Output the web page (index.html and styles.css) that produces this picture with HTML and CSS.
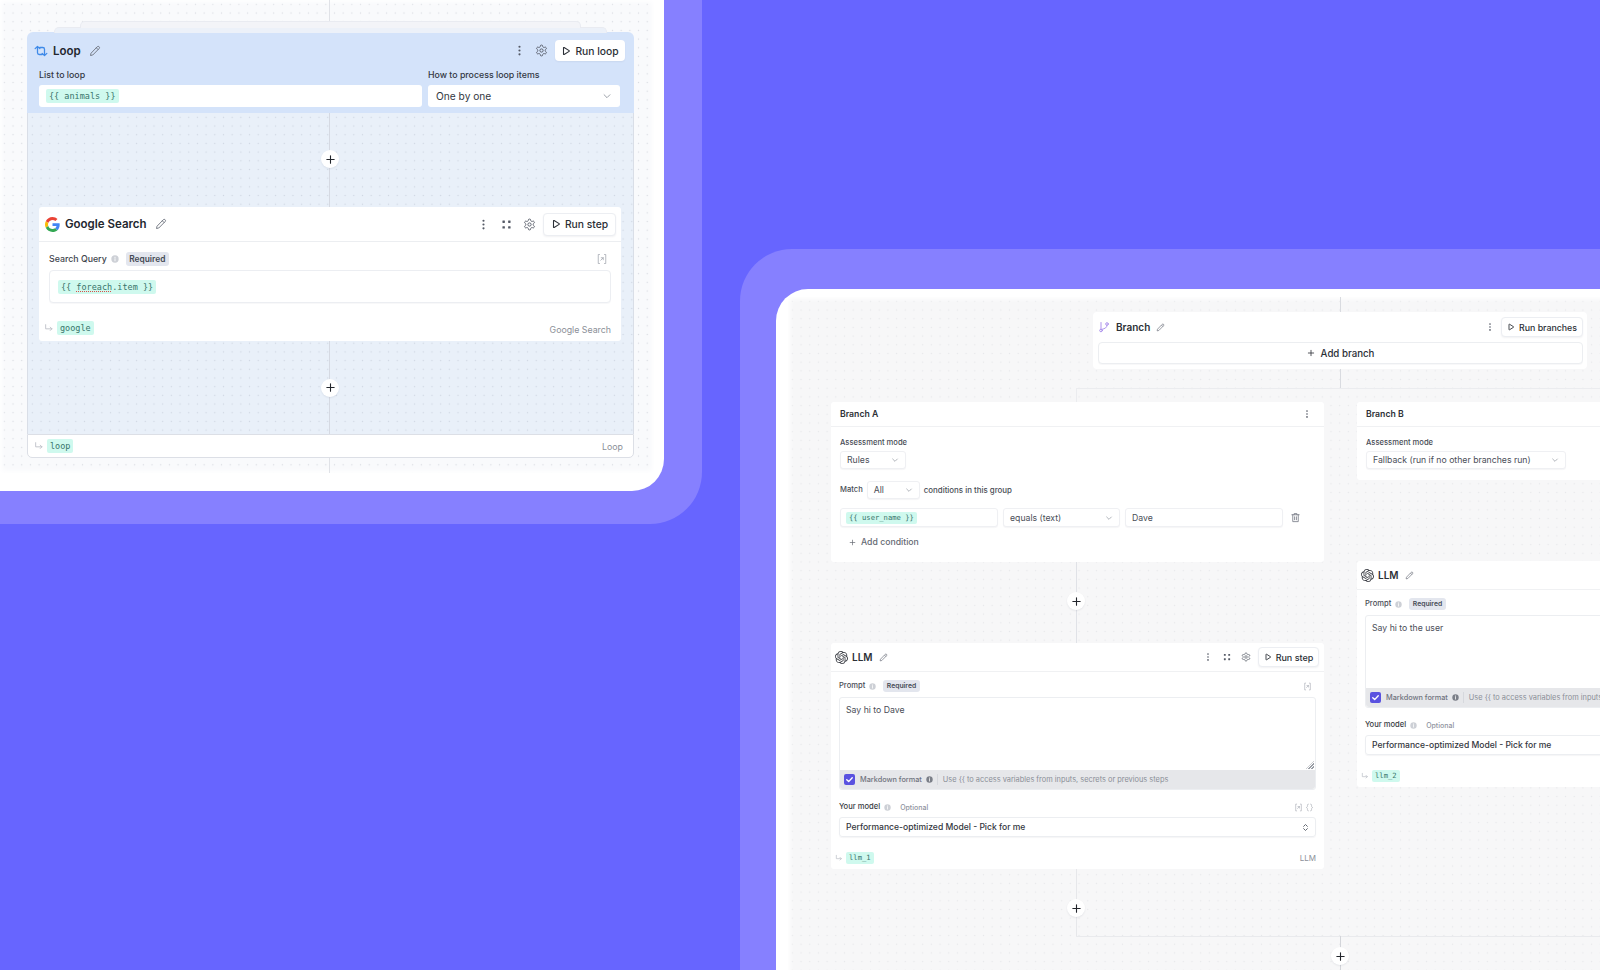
FILE: index.html
```html
<!DOCTYPE html>
<html lang="en">
<head>
    <meta charset="UTF-8">
    <meta name="viewport" content="width=device-width, initial-scale=1.0">
    <title>Loop and branch workflow steps</title>
    <link rel="stylesheet" href="styles.css">
</head>
<body>

<svg class="sprite" xmlns="http://www.w3.org/2000/svg">
    <symbol id="i-pencil" viewBox="0 0 24 24"><path d="M16.5 3.5a2.6 2.6 0 0 1 3.7 3.7L7.5 20 3 21l1-4.5z M14.5 5.5l4 4" fill="none" stroke="currentColor" stroke-width="1.8" stroke-linejoin="round"/></symbol>
    <symbol id="i-kebab" viewBox="0 0 24 24"><circle cx="12" cy="5" r="2" fill="currentColor"/><circle cx="12" cy="12" r="2" fill="currentColor"/><circle cx="12" cy="19" r="2" fill="currentColor"/></symbol>
    <symbol id="i-grid" viewBox="0 0 24 24"><g fill="currentColor"><rect x="4.500" y="4.500" width="4.500" height="4.500" rx="0.800"/><rect x="15" y="4.500" width="4.500" height="4.500" rx="0.800"/><rect x="4.500" y="15" width="4.500" height="4.500" rx="0.800"/><rect x="15" y="15" width="4.500" height="4.500" rx="0.800"/></g></symbol>
    <symbol id="i-gear" viewBox="0 0 24 24"><g fill="none" stroke="currentColor" stroke-width="1.7" stroke-linejoin="round"><path d="M12.2 2h-.4a2 2 0 0 0-2 2v.2a2 2 0 0 1-1 1.7l-.4.3a2 2 0 0 1-2 0l-.2-.1a2 2 0 0 0-2.7.7l-.2.4a2 2 0 0 0 .7 2.7l.2.1a2 2 0 0 1 1 1.7v.6a2 2 0 0 1-1 1.7l-.2.1a2 2 0 0 0-.7 2.7l.2.4a2 2 0 0 0 2.7.7l.2-.1a2 2 0 0 1 2 0l.4.3a2 2 0 0 1 1 1.7v.2a2 2 0 0 0 2 2h.4a2 2 0 0 0 2-2v-.2a2 2 0 0 1 1-1.7l.4-.3a2 2 0 0 1 2 0l.2.1a2 2 0 0 0 2.7-.7l.2-.4a2 2 0 0 0-.7-2.7l-.2-.1a2 2 0 0 1-1-1.7v-.6a2 2 0 0 1 1-1.7l.2-.1a2 2 0 0 0 .7-2.7l-.2-.4a2 2 0 0 0-2.7-.7l-.2.1a2 2 0 0 1-2 0l-.4-.3a2 2 0 0 1-1-1.7V4a2 2 0 0 0-2-2z"/><circle cx="12" cy="12" r="3"/></g></symbol>
    <symbol id="i-play" viewBox="0 0 24 24"><path d="M6 4.5v15a1 1 0 0 0 1.5.85l12-7.5a1 1 0 0 0 0-1.7l-12-7.5A1 1 0 0 0 6 4.5z" fill="none" stroke="currentColor" stroke-width="2.6" stroke-linejoin="round"/></symbol>
    <symbol id="i-chevron" viewBox="0 0 24 24"><path d="M5 9l7 7 7-7" fill="none" stroke="currentColor" stroke-width="2" stroke-linecap="round" stroke-linejoin="round"/></symbol>
    <symbol id="i-updown" viewBox="0 0 24 24"><path d="M7 9l5-5 5 5M7 15l5 5 5-5" fill="none" stroke="currentColor" stroke-width="2.4" stroke-linecap="round" stroke-linejoin="round"/></symbol>
    <symbol id="i-info" viewBox="0 0 24 24"><circle cx="12" cy="12" r="11" fill="currentColor"/><path d="M12 11v6.5M12 6.5v1.5" stroke="#fff" stroke-width="2.6" stroke-linecap="round"/></symbol>
    <symbol id="i-return" viewBox="0 0 24 24"><path d="M4 4v10h15M15 10l4 4-4 4" fill="none" stroke="currentColor" stroke-width="2" stroke-linecap="round" stroke-linejoin="round"/></symbol>
    <symbol id="i-var" viewBox="0 0 24 24"><path d="M7 3H4.5v18H7M17 3h2.5v18H17M9.5 14.5L14.5 9.5M10.5 9.5h4v4" fill="none" stroke="currentColor" stroke-width="1.6" stroke-linecap="round" stroke-linejoin="round"/></symbol>
    <symbol id="i-braces" viewBox="0 0 24 24"><path d="M9 3C6.5 3 6.5 4.5 6.5 7c0 3-.5 4-2.5 5 2 1 2.500 2 2.500 5 0 2.500 0 4 2.500 4M15 3c2.500 0 2.500 1.500 2.500 4 0 3 .5 4 2.500 5-2 1-2.500 2-2.500 5 0 2.500 0 4-2.500 4" fill="none" stroke="currentColor" stroke-width="1.7" stroke-linecap="round"/></symbol>
    <symbol id="i-plus" viewBox="0 0 24 24"><path d="M12 4v16M4 12h16" fill="none" stroke="currentColor" stroke-width="2.4" stroke-linecap="round"/></symbol>
    <symbol id="i-trash" viewBox="0 0 24 24"><path d="M4 6h16M9 6V3.500h6V6M6 6v15h12V6M10 10.500v6.500M14 10.500v6.500" fill="none" stroke="currentColor" stroke-width="1.8" stroke-linecap="round" stroke-linejoin="round"/></symbol>
    <symbol id="i-loop" viewBox="0 0 24 24"><path d="M2 8l4-4 4 4M6 4.500V15a3 3 0 0 0 3 3h5M22 16l-4 4-4-4M18 19.500V9a3 3 0 0 0-3-3h-5" fill="none" stroke="currentColor" stroke-width="2.2" stroke-linecap="round" stroke-linejoin="round"/></symbol>
    <symbol id="i-branch" viewBox="0 0 24 24"><g fill="none" stroke="currentColor" stroke-width="1.8" stroke-linecap="round"><circle cx="6" cy="19" r="2.600"/><circle cx="18" cy="6" r="2.600"/><path d="M6 16.400V3M18 8.600c0 5-4 6.400-9.500 8"/></g></symbol>
    <symbol id="i-openai" viewBox="0 0 24 24"><path fill="currentColor" d="M22.2819 9.8211a5.9847 5.9847 0 0 0-.5157-4.9108 6.0462 6.0462 0 0 0-6.5098-2.9A6.0651 6.0651 0 0 0 4.9807 4.1818a5.9847 5.9847 0 0 0-3.9977 2.9 6.0462 6.0462 0 0 0 .7427 7.0966 5.98 5.98 0 0 0 .511 4.9107 6.051 6.051 0 0 0 6.5146 2.9001A5.9847 5.9847 0 0 0 13.2599 24a6.0557 6.0557 0 0 0 5.7718-4.2058 5.9894 5.9894 0 0 0 3.9977-2.9001 6.0557 6.0557 0 0 0-.7475-7.0729zm-9.022 12.6081a4.4755 4.4755 0 0 1-2.8764-1.0408l.1419-.0804 4.7783-2.7582a.7948.7948 0 0 0 .3927-.6813v-6.7369l2.02 1.1686a.071.071 0 0 1 .038.052v5.5826a4.504 4.504 0 0 1-4.4945 4.4944zm-9.6607-4.1254a4.4708 4.4708 0 0 1-.5346-3.0137l.142.0852 4.783 2.7582a.7712.7712 0 0 0 .7806 0l5.8428-3.3685v2.3324a.0804.0804 0 0 1-.0332.0615L9.74 19.9502a4.4992 4.4992 0 0 1-6.1408-1.6464zM2.3408 7.8956a4.485 4.485 0 0 1 2.3655-1.9728V11.6a.7664.7664 0 0 0 .3879.6765l5.8144 3.3543-2.0201 1.1685a.0757.0757 0 0 1-.071 0l-4.8303-2.7865A4.504 4.504 0 0 1 2.3408 7.872zm16.5963 3.8558L13.1038 8.364 15.1192 7.2a.0757.0757 0 0 1 .071 0l4.8303 2.7913a4.4944 4.4944 0 0 1-.6765 8.1042v-5.6772a.79.79 0 0 0-.407-.667zm2.0107-3.0231l-.142-.0852-4.7735-2.7818a.7759.7759 0 0 0-.7854 0L9.409 9.2297V6.8974a.0662.0662 0 0 1 .0284-.0615l4.8303-2.7866a4.4992 4.4992 0 0 1 6.6802 4.66zM8.3065 12.863l-2.02-1.1638a.0804.0804 0 0 1-.038-.0567V6.0742a4.4992 4.4992 0 0 1 7.3757-3.4537l-.142.0805L8.704 5.459a.7948.7948 0 0 0-.3927.6813zm1.0976-2.3654l2.602-1.4998 2.6069 1.4998v2.9994l-2.5974 1.4997-2.6067-1.4997Z"/></symbol>
    <symbol id="i-google" viewBox="0 0 48 48">
        <path fill="#EA4335" d="M24 9.5c3.54 0 6.71 1.22 9.21 3.6l6.85-6.85C35.9 2.38 30.47 0 24 0 14.62 0 6.51 5.38 2.56 13.22l7.98 6.19C12.43 13.72 17.74 9.5 24 9.5z"/>
        <path fill="#4285F4" d="M46.98 24.55c0-1.57-.15-3.09-.38-4.55H24v9.02h12.94c-.58 2.96-2.26 5.48-4.78 7.18l7.73 6c4.51-4.18 7.09-10.36 7.09-17.65z"/>
        <path fill="#FBBC05" d="M10.53 28.59c-.48-1.45-.76-2.99-.76-4.59s.27-3.14.76-4.59l-7.98-6.19C.92 16.46 0 20.12 0 24c0 3.88.92 7.54 2.56 10.78l7.97-6.19z"/>
        <path fill="#34A853" d="M24 48c6.48 0 11.93-2.13 15.89-5.81l-7.73-6c-2.15 1.45-4.92 2.3-8.16 2.3-6.26 0-11.57-4.22-13.47-9.91l-7.98 6.19C6.51 42.62 14.62 48 24 48z"/>
    </symbol>
</svg>

<!-- first window: loop -->
<div class="window window-loop">
    <div class="panel panel-loop">
        <div class="canvas canvas-loop">
            <div class="edge edge-loop-top"></div>
            <div class="edge edge-loop-bottom"></div>

            <div class="loop-card">
                <div class="loop-head">
                    <div class="head-row">
                        <svg class="icon loop-icon"><use href="#i-loop"/></svg>
                        <span class="title-lg">Loop</span>
                        <svg class="icon pencil"><use href="#i-pencil"/></svg>
                        <span class="spacer"></span>
                        <svg class="icon tool"><use href="#i-kebab"/></svg>
                        <svg class="icon tool"><use href="#i-gear"/></svg>
                        <button class="run-btn run-lg run-flat"><svg class="icon play"><use href="#i-play"/></svg>Run loop</button>
                    </div>
                    <div class="loop-fields">
                        <div class="loop-field loop-field-list">
                            <span class="label-lg">List to loop</span>
                            <div class="input-flat"><span class="chip chip-lg">{{ animals }}</span></div>
                        </div>
                        <div class="loop-field loop-field-mode">
                            <span class="label-lg">How to process loop items</span>
                            <div class="input-flat select-flat">One by one<svg class="icon chevron"><use href="#i-chevron"/></svg></div>
                        </div>
                    </div>
                </div>

                <div class="loop-body">
                    <div class="connector connector-top"><span class="plus"><svg class="icon plus-icon"><use href="#i-plus"/></svg></span></div>

                    <div class="google-card">
                        <div class="google-head">
                            <svg class="icon google-icon"><use href="#i-google"/></svg>
                            <span class="title-lg">Google Search</span>
                            <svg class="icon pencil"><use href="#i-pencil"/></svg>
                            <span class="spacer"></span>
                            <svg class="icon tool"><use href="#i-kebab"/></svg>
                            <svg class="icon tool"><use href="#i-grid"/></svg>
                            <svg class="icon tool"><use href="#i-gear"/></svg>
                            <button class="run-btn run-lg"><svg class="icon play"><use href="#i-play"/></svg>Run step</button>
                        </div>
                        <div class="google-body">
                            <div class="field-row field-row-lg">
                                <span class="field-name">Search Query</span>
                                <svg class="icon info"><use href="#i-info"/></svg>
                                <span class="badge badge-lg">Required</span>
                                <span class="spacer"></span>
                                <svg class="icon var var-lg"><use href="#i-var"/></svg>
                            </div>
                            <div class="query-box"><span class="chip chip-lg">{{ <span class="typo">foreach</span>.item }}</span></div>
                            <div class="step-foot google-foot">
                                <svg class="icon return"><use href="#i-return"/></svg>
                                <span class="chip chip-out">google</span>
                                <span class="spacer"></span>
                                <span class="step-type step-type-lg">Google Search</span>
                            </div>
                        </div>
                    </div>

                    <div class="connector connector-bottom"><span class="plus"><svg class="icon plus-icon"><use href="#i-plus"/></svg></span></div>
                </div>

                <div class="loop-foot">
                    <svg class="icon return"><use href="#i-return"/></svg>
                    <span class="chip chip-out">loop</span>
                    <span class="spacer"></span>
                    <span class="step-type step-type-lg">Loop</span>
                </div>
            </div>
        </div>
    </div>
</div>

<!-- second window: branches -->
<div class="window window-branch">
    <div class="panel panel-branch">
        <div class="canvas canvas-branch">
            <div class="edge e1"></div>
            <div class="edge e2"></div>
            <div class="edge e3"></div>
            <div class="edge e4"></div>
            <div class="edge e5"></div>
            <div class="edge e6"></div>
            <div class="edge e7"></div>

            <span class="plus plus-a"><svg class="icon plus-icon"><use href="#i-plus"/></svg></span>
            <span class="plus plus-b"><svg class="icon plus-icon"><use href="#i-plus"/></svg></span>
            <span class="plus plus-c"><svg class="icon plus-icon"><use href="#i-plus"/></svg></span>

            <div class="node node-branch">
                <div class="branch-head">
                    <svg class="icon branch-icon"><use href="#i-branch"/></svg>
                    <span class="title-md">Branch</span>
                    <svg class="icon pencil pencil-sm"><use href="#i-pencil"/></svg>
                    <span class="spacer"></span>
                    <svg class="icon tool tool-sm"><use href="#i-kebab"/></svg>
                    <button class="run-btn run-sm run-wide"><svg class="icon play play-sm"><use href="#i-play"/></svg>Run branches</button>
                </div>
                <button class="add-branch"><svg class="icon add-icon"><use href="#i-plus"/></svg>Add branch</button>
            </div>

            <div class="node node-a">
                <div class="case-head">
                    <span class="case-title">Branch A</span>
                    <span class="spacer"></span>
                    <svg class="icon tool tool-sm"><use href="#i-kebab"/></svg>
                </div>
                <div class="case-body">
                    <span class="label-sm">Assessment mode</span>
                    <div class="input-sm select-sm select-rules">Rules<svg class="icon chevron"><use href="#i-chevron"/></svg></div>
                    <div class="match-row">
                        <span class="label-sm">Match</span>
                        <div class="input-sm select-sm select-all">All<svg class="icon chevron"><use href="#i-chevron"/></svg></div>
                        <span class="label-sm match-note">conditions in this group</span>
                    </div>
                    <div class="condition-row">
                        <div class="input-sm cond-col"><span class="chip chip-sm">{{ user_name }}</span></div>
                        <div class="input-sm select-sm cond-op">equals (text)<svg class="icon chevron"><use href="#i-chevron"/></svg></div>
                        <div class="input-sm cond-col">Dave</div>
                        <svg class="icon trash"><use href="#i-trash"/></svg>
                    </div>
                    <div class="add-condition"><svg class="icon add-cond-icon"><use href="#i-plus"/></svg>Add condition</div>
                </div>
            </div>

            <div class="node node-b">
                <div class="case-head">
                    <span class="case-title">Branch B</span>
                </div>
                <div class="case-body">
                    <span class="label-sm">Assessment mode</span>
                    <div class="input-sm select-sm select-fallback">Fallback (run if no other branches run)<svg class="icon chevron"><use href="#i-chevron"/></svg></div>
                </div>
            </div>

            <div class="node llm node-llm-a">
                <div class="llm-head">
                    <svg class="icon openai"><use href="#i-openai"/></svg>
                    <span class="title-md">LLM</span>
                    <svg class="icon pencil pencil-sm"><use href="#i-pencil"/></svg>
                    <span class="spacer"></span>
                    <svg class="icon tool tool-sm"><use href="#i-kebab"/></svg>
                    <svg class="icon tool tool-sm"><use href="#i-grid"/></svg>
                    <svg class="icon tool tool-sm"><use href="#i-gear"/></svg>
                    <button class="run-btn run-sm"><svg class="icon play play-sm"><use href="#i-play"/></svg>Run step</button>
                </div>
                <div class="llm-body">
                    <div class="field-row">
                        <span class="label-sm">Prompt</span>
                        <svg class="icon info info-sm"><use href="#i-info"/></svg>
                        <span class="badge">Required</span>
                        <span class="spacer"></span>
                        <svg class="icon var var-sm var-end"><use href="#i-var"/></svg>
                    </div>
                    <div class="prompt-box">
                        <div class="prompt-text">Say hi to Dave<span class="grip"></span></div>
                        <div class="prompt-bar">
                            <span class="checkbox"><svg viewBox="0 0 12 12"><path d="M3 6.200l2.100 2.100L9 4" fill="none" stroke="#fff" stroke-width="1.500" stroke-linecap="round" stroke-linejoin="round"/></svg></span>
                            <span>Markdown format</span>
                            <svg class="icon info info-dark"><use href="#i-info"/></svg>
                            <span class="bar-sep"></span>
                            <span class="bar-hint">Use {{ to access variables from inputs, secrets or previous steps</span>
                        </div>
                    </div>
                    <div class="field-row field-row-model">
                        <span class="label-sm label-strong">Your model</span>
                        <svg class="icon info info-sm"><use href="#i-info"/></svg>
                        <span class="optional">Optional</span>
                        <span class="spacer"></span>
                        <svg class="icon var var-sm"><use href="#i-var"/></svg>
                        <svg class="icon var var-sm"><use href="#i-braces"/></svg>
                    </div>
                    <div class="model-select">Performance-optimized Model - Pick for me<svg class="icon updown"><use href="#i-updown"/></svg></div>
                    <div class="step-foot llm-foot">
                        <svg class="icon return return-sm"><use href="#i-return"/></svg>
                        <span class="chip chip-sm">llm_1</span>
                        <span class="spacer"></span>
                        <span class="step-type">LLM</span>
                    </div>
                </div>
            </div>

            <div class="node llm node-llm-b">
                <div class="llm-head">
                    <svg class="icon openai"><use href="#i-openai"/></svg>
                    <span class="title-md">LLM</span>
                    <svg class="icon pencil pencil-sm"><use href="#i-pencil"/></svg>
                </div>
                <div class="llm-body">
                    <div class="field-row">
                        <span class="label-sm">Prompt</span>
                        <svg class="icon info info-sm"><use href="#i-info"/></svg>
                        <span class="badge">Required</span>
                    </div>
                    <div class="prompt-box">
                        <div class="prompt-text">Say hi to the user</div>
                        <div class="prompt-bar">
                            <span class="checkbox"><svg viewBox="0 0 12 12"><path d="M3 6.200l2.100 2.100L9 4" fill="none" stroke="#fff" stroke-width="1.500" stroke-linecap="round" stroke-linejoin="round"/></svg></span>
                            <span>Markdown format</span>
                            <svg class="icon info info-dark"><use href="#i-info"/></svg>
                            <span class="bar-sep"></span>
                            <span class="bar-hint">Use {{ to access variables from inputs, secrets or previous steps</span>
                        </div>
                    </div>
                    <div class="field-row field-row-model">
                        <span class="label-sm label-strong">Your model</span>
                        <svg class="icon info info-sm"><use href="#i-info"/></svg>
                        <span class="optional">Optional</span>
                    </div>
                    <div class="model-select">Performance-optimized Model - Pick for me</div>
                    <div class="step-foot llm-foot">
                        <svg class="icon return return-sm"><use href="#i-return"/></svg>
                        <span class="chip chip-sm">llm_2</span>
                    </div>
                </div>
            </div>
        </div>
    </div>
</div>

</body>
</html>
```

FILE: styles.css
```css
* {
    box-sizing: border-box;
}

html, body {
    margin: 0;
    height: 100%;
}

body {
    position: relative;
    overflow: hidden;
    background-color: #6765ff;
    font-family: "Inter", "Noto Sans", sans-serif;
    color: #2b2f36;
}

.sprite {
    display: none;
}

.icon {
    display: block;
    flex: none;
}

.spacer {
    flex: 1;
}

button {
    font-family: inherit;
    color: inherit;
}

/* windows */
.window {
    position: absolute;
    background-color: #8680ff;
}

.window-loop {
    left: 0;
    top: 0;
    width: 702px;
    height: 524px;
    border-bottom-right-radius: 52px;
}

.window-branch {
    left: 740px;
    top: 249px;
    width: 900px;
    height: 760px;
    border-top-left-radius: 52px;
    padding: 40px 0 0 36px;
}

.panel {
    background-color: #fff;
}

.panel-loop {
    width: 664px;
    height: 491px;
    padding: 0 10px 18px 0;
    border-bottom-right-radius: 32px;
}

.panel-branch {
    height: 100%;
    padding: 8px 0 0 12px;
    border-top-left-radius: 32px;
}

.canvas {
    position: relative;
    height: 100%;
    background-size: 8.7px 8.7px;
    box-shadow: inset 0 0 5px 2px #fff;
}

.canvas-loop {
    background-color: #f9fafc;
    background-image: radial-gradient(circle, #d9dbe2 0.7px, transparent 1px);
}

.canvas-branch {
    background-color: #f7f7f8;
    background-image: radial-gradient(circle, #e6e7ea 0.7px, transparent 1px);
}

/* edges between steps */
.edge {
    position: absolute;
    background-color: #e0e2e7;
    width: 1px;
}

.edge-loop-top {
    left: 329px;
    top: 0;
    height: 32px;
}

.edge-loop-bottom {
    left: 329px;
    top: 458px;
    height: 15px;
}

.e1 { left: 552px; top: 0; height: 91px; background-color: #d9dbe0; }
.e2 { left: 288px; top: 91px; width: 600px; height: 1px; background-color: #ebecef; }
.e3 { left: 288px; top: 91px; height: 14px; background-color: #ebecef; }
.e4 { left: 288px; top: 265px; height: 81px; }
.e5 { left: 288px; top: 572px; height: 67px; background-color: #e6e7ea; }
.e6 { left: 288px; top: 639px; width: 600px; height: 1px; background-color: #e9eaed; }
.e7 { left: 552px; top: 639px; height: 40px; background-color: #d3d5da; }

.plus {
    display: flex;
    align-items: center;
    justify-content: center;
    width: 18px;
    height: 18px;
    border-radius: 50%;
    background-color: #fff;
    box-shadow: 0 1px 2px rgba(30, 35, 60, 0.08);
    color: #23262c;
}

.plus-icon {
    width: 11px;
    height: 11px;
}

.plus-a { position: absolute; left: 279px; top: 295px; }
.plus-b { position: absolute; left: 279px; top: 602px; }
.plus-c { position: absolute; left: 543px; top: 650px; }

/* loop card */
.loop-card {
    position: absolute;
    left: 27px;
    top: 32px;
    width: 607px;
    height: 426px;
    display: flex;
    flex-direction: column;
    border-radius: 6px;
}

.loop-card::before,
.loop-card::after {
    content: "";
    position: absolute;
    border: 1px solid #e9ebf1;
    border-bottom: none;
    border-radius: 5px 5px 0 0;
}

.loop-card::before {
    left: 27px;
    right: 27px;
    top: -5px;
    height: 5px;
    background-color: #ecf1f9;
}

.loop-card::after {
    left: 53px;
    right: 53px;
    top: -11px;
    height: 6px;
    background-color: #f3f4f8;
}

.loop-head {
    height: 81px;
    padding: 8px 9px 0 7px;
    background-color: #d4e3fa;
    border-radius: 6px 6px 0 0;
}

.head-row {
    display: flex;
    align-items: center;
    height: 21px;
}

.loop-icon {
    width: 14px;
    height: 14px;
    color: #3f8ae8;
    margin-right: 5px;
}

.title-lg {
    font-size: 11.500px;
    font-weight: 600;
    color: #23272e;
}

.pencil {
    width: 12px;
    height: 12px;
    margin-left: 8px;
    color: #6a6f7a;
}

.tool {
    width: 13px;
    height: 13px;
    color: #555a66;
    margin-right: 9px;
}

.head-row .tool:last-of-type {
    margin-right: 7px;
}

.run-btn {
    display: flex;
    align-items: center;
    justify-content: center;
    gap: 4px;
    border: 1px solid #eceef2;
    border-radius: 4px;
    background-color: #fff;
    box-shadow: 0 1px 2px rgba(30, 35, 60, 0.06);
    padding: 0;
    font-weight: 500;
}

.run-lg {
    width: 73px;
    height: 23px;
    font-size: 10.300px;
}

.run-flat {
    width: 70px;
    height: 21px;
    border: none;
}

.play {
    width: 10px;
    height: 10px;
}

.loop-fields {
    display: flex;
    gap: 6px;
    margin-top: 7px;
    padding-left: 5px;
}

.loop-field {
    display: flex;
    flex-direction: column;
}

.loop-field-list {
    width: 383px;
}

.loop-field-mode {
    width: 192px;
}

.label-lg {
    height: 13px;
    line-height: 13px;
    font-size: 8.800px;
    font-weight: 500;
    color: #333843;
    margin-bottom: 4px;
}

.input-flat {
    display: flex;
    align-items: center;
    height: 22px;
    padding: 0 8px;
    background-color: #fff;
    border-radius: 3px;
    font-size: 10.200px;
    color: #33373f;
}

.select-flat {
    justify-content: space-between;
}

.chevron {
    width: 10px;
    height: 10px;
    color: #8a8f99;
}

.chip {
    display: inline-block;
    border-radius: 2px;
    background-color: #cff9ee;
    color: #37746a;
    font-family: "DejaVu Sans Mono", "Liberation Mono", monospace;
}

.chip-lg {
    padding: 0 3px;
    margin-left: -1px;
    font-size: 8.500px;
    line-height: 14px;
}

.chip-sm {
    padding: 0 3px;
    font-size: 7.200px;
    line-height: 12px;
}

.chip-out {
    padding: 0 3px;
    margin-left: 3px;
    font-size: 8.500px;
    line-height: 14px;
}

.typo {
    text-decoration: underline dotted #d8504a 1px;
    text-underline-offset: 1px;
}

.loop-body {
    flex: 1;
    display: flex;
    flex-direction: column;
    padding: 0 12px 0 11px;
    background-color: #e9f0f9;
    background-image: radial-gradient(circle, #cfd6e2 0.7px, transparent 1px);
    background-size: 8.7px 8.7px;
    border-left: 1px solid #d9dee7;
    border-right: 1px solid #d9dee7;
}

.connector {
    position: relative;
    display: flex;
    align-items: center;
    justify-content: center;
}

.connector::before {
    content: "";
    position: absolute;
    left: calc(50% - 1px);
    top: 0;
    bottom: 0;
    width: 1px;
    background-color: #d5d9e2;
}

.connector .plus {
    position: relative;
}

.connector-top {
    height: 94px;
    padding-bottom: 2px;
}

.connector-bottom {
    height: 93px;
}

.google-card {
    height: 134px;
    background-color: #fff;
    border-radius: 3px;
}

.google-head {
    display: flex;
    align-items: center;
    height: 35px;
    padding: 0 5px 0 6px;
    border-bottom: 1px solid #eceef1;
}

.google-icon {
    width: 15px;
    height: 15px;
    margin-right: 5px;
}

.google-head .tool {
    margin-right: 10px;
}

.google-head .tool:last-of-type {
    margin-right: 7px;
}

.google-body {
    padding: 0 10px;
}

.field-row {
    display: flex;
    align-items: center;
    height: 12px;
}

.field-row-lg {
    height: 28px;
    padding-top: 5px;
}

.field-name {
    font-size: 8.800px;
    font-weight: 500;
    color: #40444d;
}

.info {
    width: 8px;
    height: 8px;
    margin-left: 4px;
    color: #cdd0d6;
}

.badge {
    margin-left: 5px;
    padding: 0 3.500px;
    border-radius: 3px;
    background-color: #e3e6ee;
    color: #454a55;
    font-size: 6.800px;
    font-weight: 600;
    line-height: 12px;
}

.field-row .badge-lg {
    margin-left: 10px;
    font-size: 8.400px;
    line-height: 14px;
}

.var {
    width: 12px;
    height: 12px;
    color: #a4a8b1;
}

.var-lg {
    margin-right: 3px;
}

.query-box {
    display: flex;
    align-items: center;
    height: 33px;
    padding: 0 9px;
    background-color: #fff;
    border: 1px solid #eceef2;
    border-radius: 4px;
    box-shadow: 0 1px 1px rgba(30, 35, 60, 0.03);
}

.step-foot {
    display: flex;
    align-items: center;
}

.google-foot {
    height: 14px;
    margin: 18px 0 0 -5px;
}

.return {
    width: 10px;
    height: 10px;
    color: #b7bbc3;
}

.step-type {
    font-size: 8px;
    color: #8b8f98;
}

.step-type-lg {
    font-size: 8.800px;
}

.google-foot .step-type {
    padding-top: 2px;
}

.loop-foot {
    display: flex;
    align-items: center;
    height: 24px;
    padding: 0 10px 0 6px;
    background-color: #fff;
    border: 1px solid #dcdfe6;
    border-radius: 0 0 5px 5px;
}

/* branch nodes */
.node {
    position: absolute;
    background-color: #fff;
    border-radius: 3px;
}

.node-branch {
    left: 305px;
    top: 15px;
    width: 494px;
    height: 57px;
    padding: 0 4px 0 5px;
    border-radius: 4px;
}

.branch-head {
    display: flex;
    align-items: center;
    height: 30px;
}

.branch-icon {
    width: 12px;
    height: 12px;
    margin-right: 6px;
    color: #a689ea;
}

.title-md {
    font-size: 10px;
    font-weight: 600;
    color: #2d3036;
}

.pencil-sm {
    width: 9px;
    height: 9px;
    margin-left: 6px;
}

.tool-sm {
    width: 10px;
    height: 10px;
    margin-right: 9px;
}

.branch-head .tool-sm {
    margin-right: 6px;
}

.llm-head .tool-sm:last-of-type {
    margin-right: 7px;
}

.run-sm {
    width: 61px;
    height: 20px;
    font-size: 9px;
}

.run-wide {
    width: 82px;
    font-size: 8.800px;
}

.play-sm {
    width: 8px;
    height: 8px;
}

.add-branch {
    display: flex;
    align-items: center;
    justify-content: center;
    gap: 6px;
    width: 100%;
    height: 22px;
    background-color: #fff;
    border: 1px solid #eceef1;
    border-radius: 4px;
    box-shadow: 0 1px 1px rgba(30, 35, 60, 0.03);
    font-size: 9.700px;
    font-weight: 500;
    padding: 0;
}

.add-icon {
    width: 8px;
    height: 8px;
}

.node-a {
    left: 43px;
    top: 105px;
    width: 493px;
    height: 160px;
}

.node-b {
    left: 569px;
    top: 105px;
    width: 493px;
    height: 78px;
}

.case-head {
    display: flex;
    align-items: center;
    height: 25px;
    padding: 0 9px;
    border-bottom: 1px solid #f0f1f3;
}

.case-title {
    font-size: 8.700px;
    font-weight: 600;
    color: #2d3036;
}

.case-head .tool-sm {
    margin-right: 3px;
}

.case-body {
    display: flex;
    flex-direction: column;
    align-items: flex-start;
    padding: 10px 9px 0;
}

.label-sm {
    font-size: 7.600px;
    font-weight: 500;
    line-height: 12px;
    color: #484c55;
}

.match-note {
    font-size: 7.900px;
}

.label-strong {
    color: #383c44;
}

.input-sm {
    display: flex;
    align-items: center;
    height: 19px;
    padding: 0 6px;
    background-color: #fff;
    border: 1px solid #eff0f3;
    border-radius: 3px;
    box-shadow: 0 1px 1px rgba(30, 35, 60, 0.04);
    font-size: 8.700px;
    color: #4a4e57;
}

.select-sm {
    justify-content: space-between;
}

.select-sm .chevron {
    width: 8px;
    height: 8px;
}

.select-rules {
    width: 66px;
    height: 18px;
    margin-top: 2px;
}

.select-fallback {
    width: 200px;
    height: 18px;
    margin-top: 2px;
}

.match-row {
    display: flex;
    align-items: center;
    gap: 4px;
    margin-top: 12px;
}

.select-all {
    width: 53px;
    height: 18px;
}

.condition-row {
    display: flex;
    align-items: center;
    gap: 5px;
    margin-top: 9px;
}

.cond-col {
    width: 158px;
}

.cond-col .chip {
    margin-left: -1px;
}

.cond-op {
    width: 117px;
}

.trash {
    width: 11px;
    height: 11px;
    margin-left: 1.500px;
    color: #777b85;
}

.add-condition {
    display: flex;
    align-items: center;
    gap: 5px;
    margin-top: 10px;
    margin-left: 9px;
    font-size: 8.700px;
    font-weight: 500;
    color: #666a73;
}

.add-cond-icon {
    width: 7px;
    height: 7px;
}

/* llm step */
.llm {
    height: 226px;
    width: 493px;
}

.node-llm-a {
    left: 43px;
    top: 346px;
}

.node-llm-b {
    left: 569px;
    top: 264px;
}

.llm-head {
    display: flex;
    align-items: center;
    height: 29px;
    padding: 0 5px 0 4px;
    border-bottom: 1px solid #f0f1f3;
}

.openai {
    width: 13px;
    height: 13px;
    margin-right: 4px;
    color: #3a3d44;
}

.llm-body {
    padding: 8px 8px 0;
}

.info-sm {
    width: 7px;
    height: 7px;
}

.var-sm {
    width: 9px;
    height: 9px;
    margin-right: 2px;
}

.var-end {
    margin-right: 4px;
}

.field-row .badge {
    margin-left: 7px;
}

.prompt-box {
    margin-top: 5px;
    height: 93px;
    border: 1px solid #eceef1;
    border-radius: 3px;
    display: flex;
    flex-direction: column;
}

.prompt-text {
    position: relative;
    flex: 1;
    padding: 6px;
    font-size: 8.700px;
    line-height: 13px;
    color: #4a4e57;
}

.grip {
    position: absolute;
    right: 1px;
    bottom: 1px;
    width: 8px;
    height: 8px;
    background: repeating-linear-gradient(135deg, transparent 0 1px, #9a9ea6 1px 2px);
    clip-path: polygon(100% 0, 100% 100%, 0 100%);
}

.prompt-bar {
    display: flex;
    align-items: center;
    height: 19px;
    padding: 0 4px;
    background-color: #e6e7ea;
    border-radius: 0 0 3px 3px;
    font-size: 7.300px;
    font-weight: 500;
    color: #70747e;
    white-space: nowrap;
}

.checkbox {
    display: block;
    flex: none;
    width: 11px;
    height: 11px;
    margin-right: 5px;
    border-radius: 2px;
    background-color: #5a52e0;
}

.checkbox svg {
    display: block;
}

.info-dark {
    width: 7px;
    height: 7px;
    color: #7b7f88;
}

.bar-sep {
    flex: none;
    width: 1px;
    height: 11px;
    margin: 0 5px 0 4px;
    background-color: #d6d8dd;
}

.bar-hint {
    font-size: 7.400px;
    font-weight: 400;
    color: #8a8e97;
}

.field-row-model {
    margin-top: 11px;
}

.optional {
    margin-left: 9px;
    font-size: 7px;
    font-weight: 500;
    color: #8f93a0;
}

.model-select {
    display: flex;
    align-items: center;
    justify-content: space-between;
    height: 20px;
    margin-top: 4px;
    padding: 0 5px 0 6px;
    border: 1px solid #eceef1;
    border-radius: 3px;
    box-shadow: 0 1px 1px rgba(30, 35, 60, 0.04);
    font-size: 8.560px;
    font-weight: 500;
    color: #33363d;
}

.updown {
    width: 9px;
    height: 9px;
    color: #555a64;
}

.llm-foot {
    height: 12px;
    margin-top: 15px;
}

.return-sm {
    width: 8px;
    height: 8px;
    margin-left: -4px;
    margin-right: 3px;
}
```
